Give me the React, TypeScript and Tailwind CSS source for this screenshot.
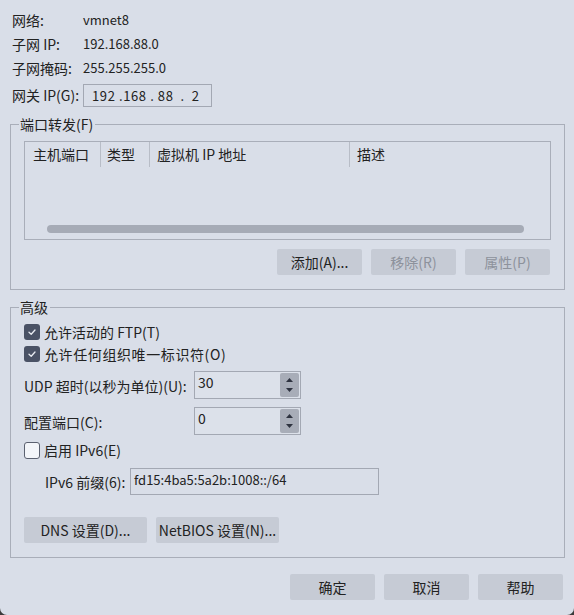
import React from "react";

const font = { fontFamily: '"Noto Sans CJK SC", "Noto Sans", sans-serif' };

const Check = ({ checked }: { checked: boolean }) =>
  checked ? (
    <span className="flex h-[16px] w-[16px] items-center justify-center rounded-[3px] bg-[#4a5265]">
      <svg width="10" height="10" viewBox="0 0 10 10" fill="none">
        <path d="M2 5.2 4.2 7.3 8 3" stroke="#e8ebf1" strokeWidth="1.3" strokeLinecap="round" strokeLinejoin="round" />
      </svg>
    </span>
  ) : (
    <span className="h-[17px] w-[16px] rounded-[3px] border border-[#5b6170] bg-[#f3f5f9]" />
  );

const Btn = ({ label, disabled, w = "w-[85px]" }: { label: string; disabled?: boolean; w?: string }) => (
  <div
    className={`flex h-[26px] ${w} items-center justify-center rounded-[2px] bg-[#c6cbd5] ${
      disabled ? "text-[#8d929c]" : "text-[#222]"
    }`}
  >
    {label}
  </div>
);

const Spinner = ({ value }: { value: string }) => (
  <div className="flex h-[28px] w-[107px] border border-[#a3a8b3] bg-[#dce1ea]">
    <div className="flex-1 pl-[3px] pt-[1px] leading-[18px]">{value}</div>
    <div className="my-[1px] mr-[1px] flex w-[19px] flex-col items-center justify-between rounded-[2px] bg-[#a8adb8] py-[5px]">
      <svg width="7" height="4" viewBox="0 0 7 4">
        <path d="M0 4 3.5 0 7 4z" fill="#2e3340" />
      </svg>
      <svg width="7" height="4" viewBox="0 0 7 4">
        <path d="M0 0 3.5 4 7 0z" fill="#2e3340" />
      </svg>
    </div>
  </div>
);

const Group = ({ title, children }: { title: string; children: React.ReactNode }) => (
  <div className="flex w-[555px] flex-col">
    <div className="flex h-[18px] items-center">
      <div className="h-[9px] w-[9px] self-end border-l border-t border-[#a9aeb9]" />
      <span className="pl-[1px] pr-[2px] leading-[18px]">{title}</span>
      <div className="h-[9px] flex-1 self-end border-r border-t border-[#a9aeb9]" />
    </div>
    <div className="border-x border-b border-[#a9aeb9]">{children}</div>
  </div>
);

export default function App() {
  return (
    <div className="h-[615px] w-[574px] bg-[#3b3b3b]">
      <div
        className="flex h-[615px] w-[574px] flex-col rounded-b-[7px] bg-[#d9dee8] text-[14px] text-[#222]"
        style={font}
      >
        {/* network info */}
        <div className="flex flex-col pl-[12px] pt-[8px]">
          <div className="flex h-[24px] items-center">
            <span className="w-[71px]">网络:</span>
            <span className="text-[13px]">vmnet8</span>
          </div>
          <div className="flex h-[24px] items-center">
            <span className="w-[71px]">子网 IP:</span>
            <span className="text-[13px]">192.168.88.0</span>
          </div>
          <div className="flex h-[24px] items-center">
            <span className="w-[71px]">子网掩码:</span>
            <span className="text-[13px]">255.255.255.0</span>
          </div>
          <div className="mt-[4px] flex items-center">
            <span className="w-[71px]">网关 IP(G):</span>
            <div className="flex h-[23px] w-[129px] items-center whitespace-pre border border-[#a3a8b3] pl-[8px] text-[13px] tracking-[0.6px]">
              {"192 .168 . 88  .  2"}
            </div>
          </div>
        </div>

        {/* port forwarding */}
        <div className="mt-[8px] pl-[10px]">
          <Group title="端口转发(F)">
            <div className="flex flex-col px-[13px] pb-[14px] pt-[8px]">
              <div className="flex h-[99px] flex-col border border-[#a9aeb9]">
                <div className="flex h-[25px] items-center">
                  <div className="flex h-full w-[76px] items-center border-r border-[#b8bdc7] pl-[8px]">主机端口</div>
                  <div className="flex h-full w-[49px] items-center border-r border-[#b8bdc7] pl-[6px]">类型</div>
                  <div className="flex h-full w-[200px] items-center border-r border-[#b8bdc7] pl-[7px]">虚拟机 IP 地址</div>
                  <div className="flex h-full flex-1 items-center pl-[7px]">描述</div>
                </div>
                <div className="flex-1" />
                <div className="mb-[6px] ml-[22px] h-[8px] w-[477px] rounded-full bg-[#a6abb6]" />
              </div>
              <div className="mt-[9px] flex justify-end gap-[9px] pr-[1px]">
                <Btn label="添加(A)..." />
                <Btn label="移除(R)" disabled />
                <Btn label="属性(P)" disabled />
              </div>
            </div>
          </Group>
        </div>

        {/* advanced */}
        <div className="mt-[8px] pl-[10px]">
          <Group title="高级">
            <div className="flex flex-col pb-[14px] pl-[13px] pt-[5px]">
              <div className="flex h-[22px] items-center gap-[4px]">
                <Check checked />
                <span>允许活动的 FTP(T)</span>
              </div>
              <div className="flex h-[22px] items-center gap-[4px]">
                <Check checked />
                <span className="tracking-[0.6px]">允许任何组织唯一标识符(O)</span>
              </div>
              <div className="mt-[6px] flex items-center">
                <span className="w-[170px] pt-[2px]">UDP 超时(以秒为单位)(U):</span>
                <Spinner value="30" />
              </div>
              <div className="mt-[8px] flex items-center">
                <span className="w-[170px] pt-[2px]">配置端口(C):</span>
                <Spinner value="0" />
              </div>
              <div className="mt-[4px] flex h-[22px] items-center gap-[4px]">
                <Check checked={false} />
                <span>启用 IPv6(E)</span>
              </div>
              <div className="mt-[7px] flex items-center pl-[21px]">
                <span className="w-[85px] pt-[2px]">IPv6 前缀(6):</span>
                <div className="h-[27px] w-[249px] border border-[#a3a8b3] pl-[3px] pt-[1px] text-[13px] leading-[20px]">
                  fd15:4ba5:5a2b:1008::/64
                </div>
              </div>
              <div className="mt-[22px] flex gap-[9px]">
                <Btn label="DNS 设置(D)..." w="w-[123px]" />
                <Btn label="NetBIOS 设置(N)..." w="w-[123px]" />
              </div>
            </div>
          </Group>
        </div>

        {/* footer */}
        <div className="mt-[16px] flex justify-end gap-[9px] pr-[11px]">
          <Btn label="确定" />
          <Btn label="取消" />
          <Btn label="帮助" />
        </div>
      </div>
    </div>
  );
}
